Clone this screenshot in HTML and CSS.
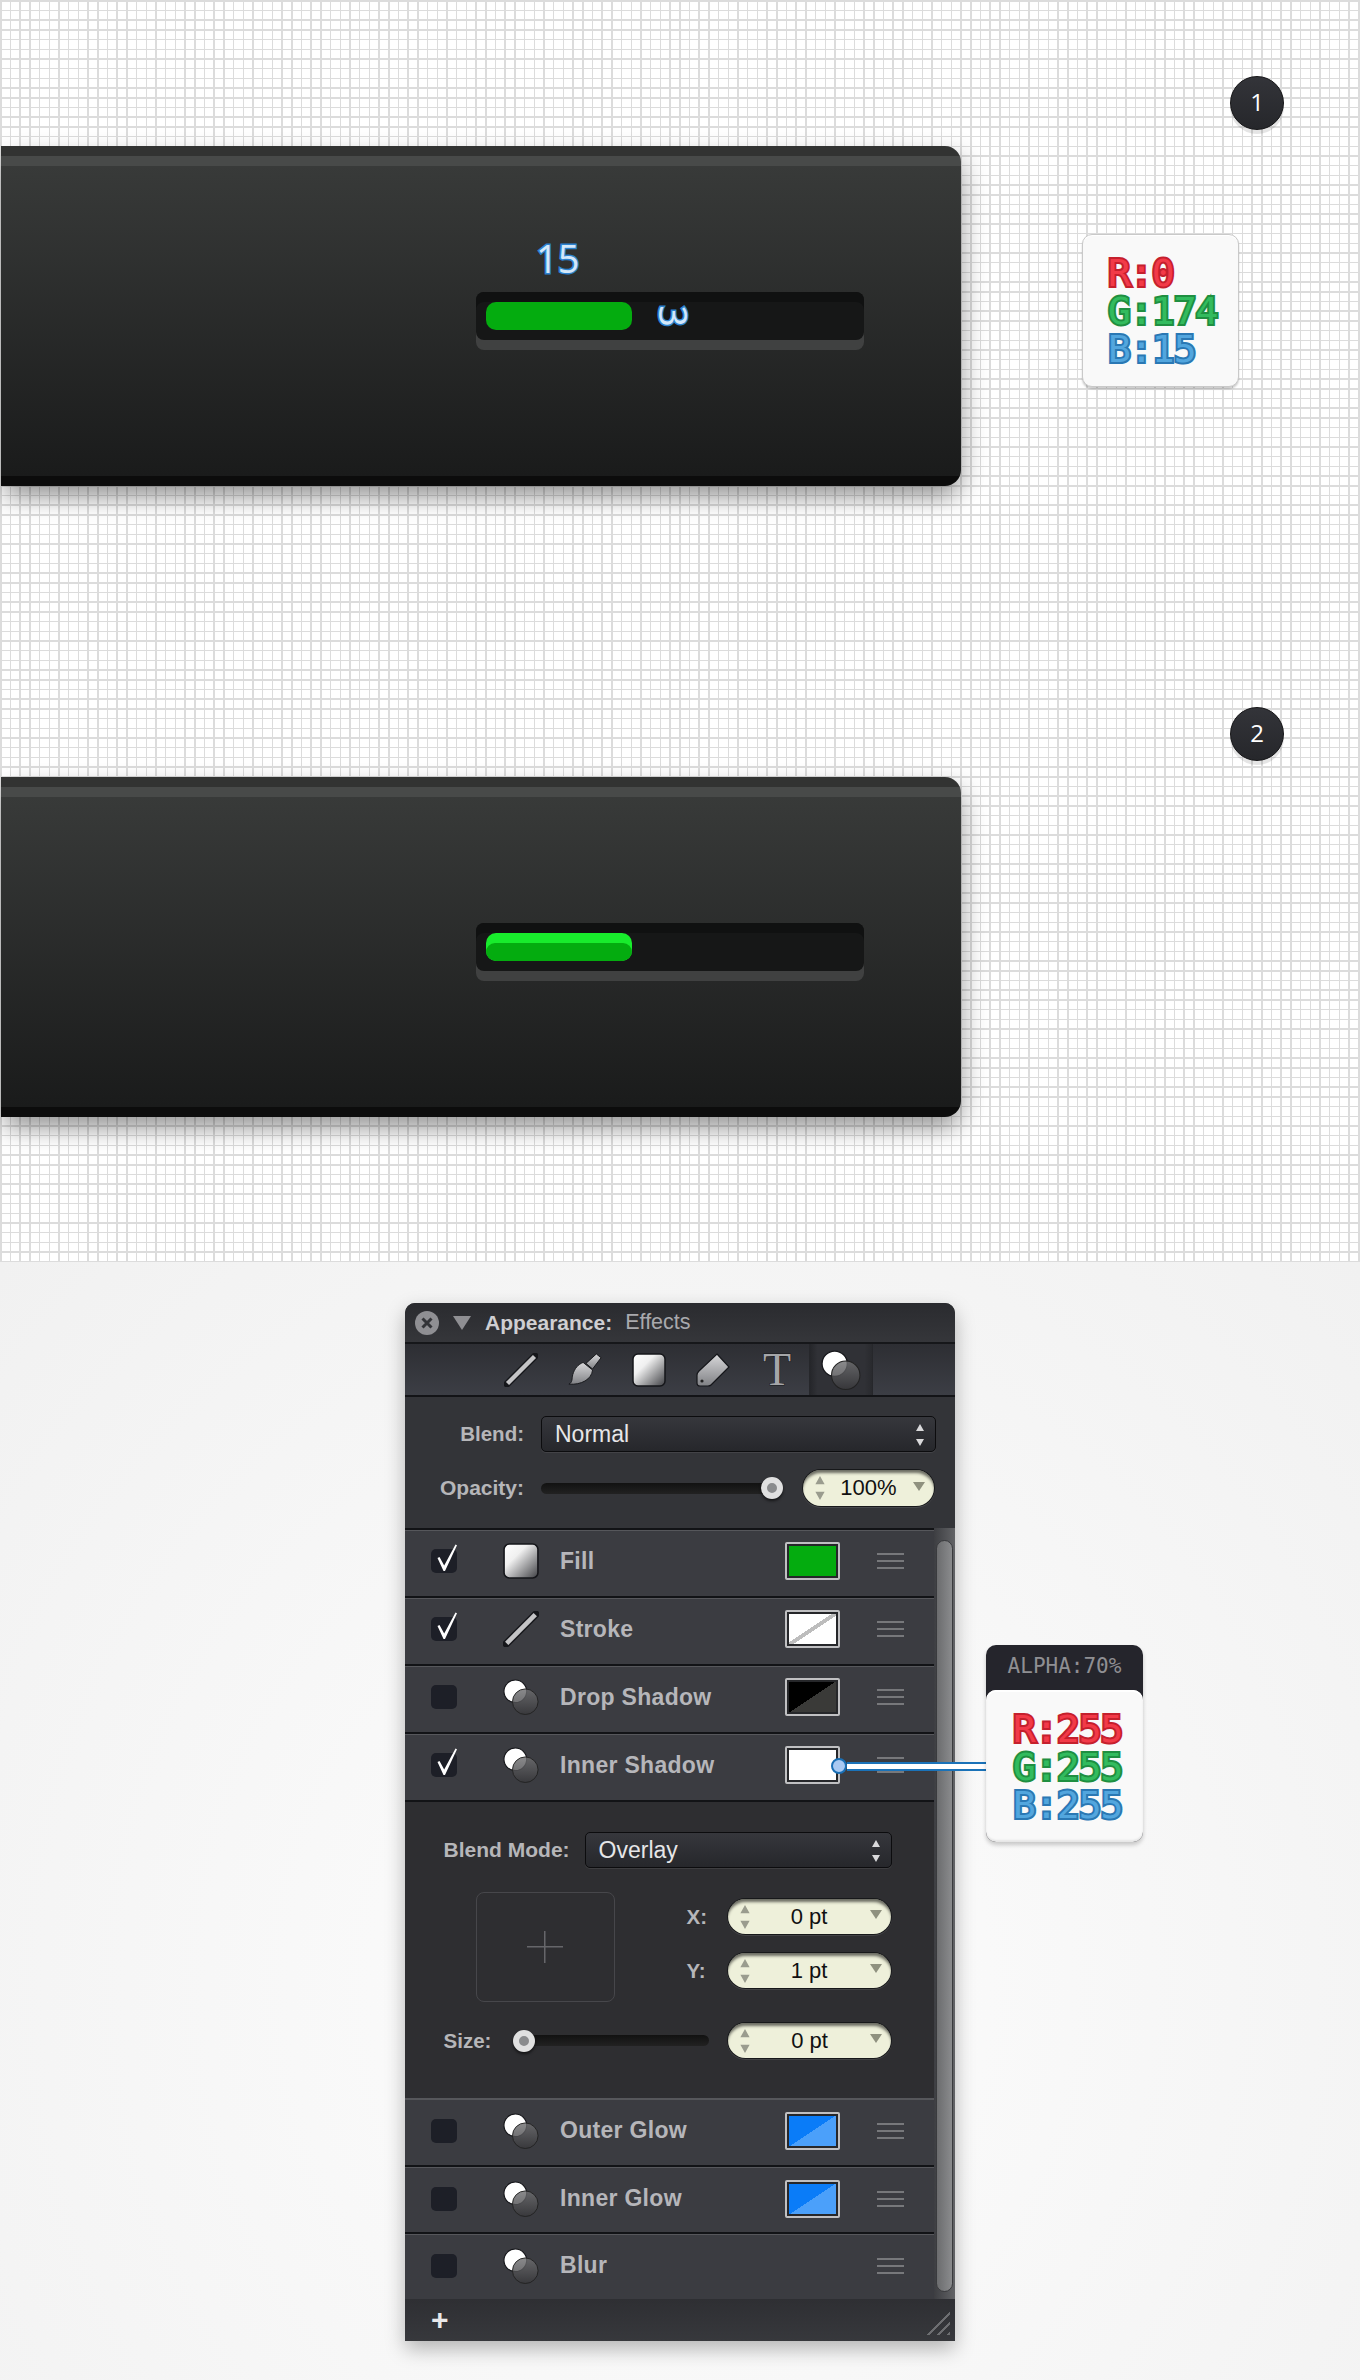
FILE: index.html
```html
<!DOCTYPE html>
<html>
  <head>
    <title>Progress bar appearance</title>
    <meta name="viewport" content="width=device-width, initial-scale=1.0">
    <link rel="stylesheet" href="styles.css">
  </head>
  <body>
    <svg class="defs" width="0" height="0">
      <defs>
        <linearGradient id="gradGrey" x1="0" y1="0" x2="1" y2="1">
          <stop offset="0" stop-color="#fff"/>
          <stop offset=".35" stop-color="#f0f0f0"/>
          <stop offset="1" stop-color="#3f4044"/>
        </linearGradient>
        <linearGradient id="gradTool" x1="0" y1="0" x2="0" y2="1">
          <stop offset="0" stop-color="#d8d8da"/>
          <stop offset="1" stop-color="#808185"/>
        </linearGradient>
        <linearGradient id="gradDark" x1="0" y1="0" x2="0" y2="1">
          <stop offset="0" stop-color="#707072"/>
          <stop offset="1" stop-color="#38383b"/>
        </linearGradient>
        <symbol id="iconLine" viewBox="0 0 34 34">
          <path d="M3 31L31 3" stroke="#15161a" stroke-width="7" stroke-linecap="round"/>
          <path d="M3.5 30.5L30.5 3.5" stroke="#c4c4c6" stroke-width="4.4"/>
        </symbol>
        <symbol id="iconBrush" viewBox="0 0 36 36">
          <path d="M30 1l5 4-9 12-7-6z" fill="url(#gradTool)" stroke="#15161a"/>
          <path d="M16 10l10 8c-1 10-12 16-25 15 4-2 3-6 4-10 2-7 6-11 11-13z" fill="url(#gradTool)" stroke="#15161a"/>
        </symbol>
        <symbol id="iconSquare" viewBox="0 0 34 34">
          <rect x="1" y="1" width="32" height="32" rx="5" fill="url(#gradGrey)" stroke="#15161a" stroke-width="1.5"/>
        </symbol>
        <symbol id="iconTag" viewBox="0 0 34 34">
          <path d="M21 1l12 13-18 18q-1 1-3 1H4q-3 0-3-3V22q0-2 2-4z" fill="url(#gradTool)" stroke="#15161a" stroke-width="1.2"/>
          <circle cx="6" cy="28" r="1.6" fill="#222"/>
        </symbol>
        <symbol id="iconEffect" viewBox="0 0 38 38">
          <circle cx="13" cy="13" r="12" fill="#fff" stroke="#15161a" stroke-width="1.2"/>
          <circle cx="23.5" cy="24" r="13.5" fill="url(#gradDark)" fill-opacity=".82" stroke="#222" stroke-width="1"/>
        </symbol>
        <symbol id="iconCheck" viewBox="0 0 26 30">
          <path d="M3.5 15l2-1 4.7 8.500L21.500 1.500l1.500.7L11 28H9.500z" fill="#fff"/>
        </symbol>
        <symbol id="iconClose" viewBox="0 0 24 24">
          <circle cx="12" cy="12" r="12" fill="#8f8f93"/>
          <path d="M7.5 7.5l9 9M16.5 7.5l-9 9" stroke="#333438" stroke-width="3"/>
        </symbol>
        <symbol id="iconStepper" viewBox="0 0 12 26">
          <path d="M6 0l5 9H1zM6 26l-5-9h10z" fill="#9a9c8e"/>
        </symbol>
        <symbol id="iconSelect" viewBox="0 0 10 24">
          <path d="M5 1l4 7H1zM5 23l-4-7h8z" fill="#d9d9db"/>
        </symbol>
      </defs>
    </svg>

    <div class="drawing">
      <div class="stage">
        <div class="card">
          <div class="measure">15</div>
          <div class="track">
            <div class="bar"></div>
            <div class="measure measure-turned">3</div>
          </div>
        </div>
        <div class="side">
          <div class="badge">1</div>
          <div class="rgb-card">
            <div class="rgb rgb-r">R:0</div>
            <div class="rgb rgb-g">G:174</div>
            <div class="rgb rgb-b">B:15</div>
          </div>
        </div>
      </div>

      <div class="stage">
        <div class="card">
          <div class="measure measure-empty"></div>
          <div class="track">
            <div class="bar bar-lit"><div class="bar-face"></div></div>
          </div>
        </div>
        <div class="side">
          <div class="badge">2</div>
        </div>
      </div>
    </div>

    <div class="desk">
      <div class="panel">
        <div class="titlebar">
          <svg class="close-icon"><use href="#iconClose"/></svg>
          <span class="disclosure"></span>
          <span class="title-main">Appearance:</span>
          <span class="title-sub">Effects</span>
        </div>

        <div class="toolbar">
          <div class="tool"><svg class="tool-icon"><use href="#iconLine"/></svg></div>
          <div class="tool"><svg class="tool-icon"><use href="#iconBrush"/></svg></div>
          <div class="tool"><svg class="tool-icon"><use href="#iconSquare"/></svg></div>
          <div class="tool"><svg class="tool-icon"><use href="#iconTag"/></svg></div>
          <div class="tool"><span class="tool-t">T</span></div>
          <div class="tool tool-active"><svg class="tool-fx"><use href="#iconEffect"/></svg></div>
        </div>

        <div class="blend-section">
          <div class="form-row">
            <span class="form-label">Blend:</span>
            <div class="select select-wide">
              <span>Normal</span>
              <svg class="select-arrows"><use href="#iconSelect"/></svg>
            </div>
          </div>
          <div class="form-row form-row-opacity">
            <span class="form-label">Opacity:</span>
            <div class="slider slider-opacity"><span class="thumb"></span></div>
            <div class="pill pill-opacity">
              <svg class="stepper"><use href="#iconStepper"/></svg>
              <span class="pill-value">100%</span>
              <span class="pill-caret"></span>
            </div>
          </div>
        </div>

        <div class="panel-body">
          <div class="layers">
            <div class="layer">
              <div class="check"><svg class="check-mark"><use href="#iconCheck"/></svg></div>
              <svg class="layer-icon"><use href="#iconSquare"/></svg>
              <span class="layer-name">Fill</span>
              <div class="swatch swatch-fill"></div>
              <div class="handle"></div>
            </div>
            <div class="layer">
              <div class="check"><svg class="check-mark"><use href="#iconCheck"/></svg></div>
              <svg class="layer-icon"><use href="#iconLine"/></svg>
              <span class="layer-name">Stroke</span>
              <div class="swatch swatch-stroke"></div>
              <div class="handle"></div>
            </div>
            <div class="layer">
              <div class="check"></div>
              <svg class="layer-icon"><use href="#iconEffect"/></svg>
              <span class="layer-name">Drop Shadow</span>
              <div class="swatch swatch-drop"></div>
              <div class="handle"></div>
            </div>
            <div class="layer">
              <div class="check"><svg class="check-mark"><use href="#iconCheck"/></svg></div>
              <svg class="layer-icon"><use href="#iconEffect"/></svg>
              <span class="layer-name">Inner Shadow</span>
              <div class="swatch swatch-white"></div>
              <div class="handle"></div>
            </div>

            <div class="detail">
              <div class="detail-blend">
                <span class="form-label">Blend Mode:</span>
                <div class="select select-mode">
                  <span>Overlay</span>
                  <svg class="select-arrows"><use href="#iconSelect"/></svg>
                </div>
              </div>
              <div class="detail-offset">
                <div class="offset-box"><span class="offset-cross"></span></div>
                <div class="offset-fields">
                  <div class="offset-field">
                    <span class="form-label offset-label">X:</span>
                    <div class="pill pill-pt">
                      <svg class="stepper"><use href="#iconStepper"/></svg>
                      <span class="pill-value">0 pt</span>
                      <span class="pill-caret"></span>
                    </div>
                  </div>
                  <div class="offset-field">
                    <span class="form-label offset-label">Y:</span>
                    <div class="pill pill-pt">
                      <svg class="stepper"><use href="#iconStepper"/></svg>
                      <span class="pill-value">1 pt</span>
                      <span class="pill-caret"></span>
                    </div>
                  </div>
                </div>
              </div>
              <div class="detail-size">
                <span class="form-label size-label">Size:</span>
                <div class="slider slider-size"><span class="thumb"></span></div>
                <div class="pill pill-pt">
                  <svg class="stepper"><use href="#iconStepper"/></svg>
                  <span class="pill-value">0 pt</span>
                  <span class="pill-caret"></span>
                </div>
              </div>
            </div>

            <div class="layer layer-low">
              <div class="check"></div>
              <svg class="layer-icon"><use href="#iconEffect"/></svg>
              <span class="layer-name">Outer Glow</span>
              <div class="swatch swatch-blue"></div>
              <div class="handle"></div>
            </div>
            <div class="layer layer-low">
              <div class="check"></div>
              <svg class="layer-icon"><use href="#iconEffect"/></svg>
              <span class="layer-name">Inner Glow</span>
              <div class="swatch swatch-blue"></div>
              <div class="handle"></div>
            </div>
            <div class="layer layer-low">
              <div class="check"></div>
              <svg class="layer-icon"><use href="#iconEffect"/></svg>
              <span class="layer-name">Blur</span>
              <div class="swatch swatch-none"></div>
              <div class="handle"></div>
            </div>
          </div>

          <div class="scrollbar"><div class="scroll-thumb"></div></div>
        </div>

        <div class="footer">
          <span class="add">+</span>
          <span class="grip"></span>
        </div>

        <!-- callout over the panel -->
        <div class="connector">
          <span class="connector-dot"></span>
          <span class="connector-line"></span>
        </div>
        <div class="alpha-card">
          <div class="alpha-head">ALPHA:70%</div>
          <div class="alpha-body">
            <div class="rgb rgb-r">R:255</div>
            <div class="rgb rgb-g">G:255</div>
            <div class="rgb rgb-b">B:255</div>
          </div>
        </div>
      </div>
    </div>
  </body>
</html>
```

FILE: styles.css
```css
body {
  margin: 0;
  width: 1360px;
  height: 2380px;
  overflow: hidden;
  font-family: "Liberation Sans", Arial, sans-serif;
  background-color: #f5f5f5;
}

.defs {
  position: absolute;
}

/* top half: graph paper */
.drawing {
  height: 1262px;
  background-color: #fff;
  background-image:
    repeating-linear-gradient(90deg, #dcdcdc 0 1.5px, transparent 1.5px 9.7px),
    repeating-linear-gradient(180deg, #dcdcdc 0 1.5px, transparent 1.5px 9.7px);
}

.stage {
  display: flex;
  align-items: flex-start;
  height: 631px;
  box-sizing: border-box;
  padding-top: 76px;
}

.card {
  width: 960px;
  height: 340px;
  margin: 70px 0 0 1px;
  box-sizing: border-box;
  padding: 91px 0 0 475px;
  border-radius: 0 16px 16px 0;
  background: linear-gradient(#323332 0 10px, #484a49 10px 20px, #383a39 20px, #1a1b1b 330px, #0c0c0c 330px);
  box-shadow: 0 16px 24px -4px rgba(0, 0, 0, .34), 8px 4px 24px rgba(0, 0, 0, .12);
}

.measure {
  height: 55px;
  margin-left: 60px;
  font-family: "Open Sans", sans-serif;
  font-size: 38px;
  line-height: 42px;
  color: #d4e8fa;
  -webkit-text-stroke: 3px #2d83cf;
  paint-order: stroke fill;
}

.measure-empty {
  visibility: hidden;
}

.measure-turned {
  height: 28px;
  margin-left: 32px;
  line-height: 30px;
  transform: rotate(90deg);
}

.track {
  display: flex;
  width: 388px;
  height: 48px;
  box-sizing: border-box;
  padding: 10px;
  border-radius: 8px;
  background-color: #161717;
  box-shadow: inset 0 10px 0 #101111, 0 10px 0 #404141;
}

.bar {
  width: 146px;
  height: 28px;
  border-radius: 10px;
  background-color: #04ac0f;
}

.bar-lit {
  background-color: #18ec2c;
  overflow: hidden;
}

.bar-face {
  height: 18px;
  margin-top: 10px;
  border-radius: 10px;
  background-color: #04ac0f;
}

.side {
  display: flex;
  flex-direction: column;
  margin-left: 121px;
}

.badge {
  width: 54px;
  height: 54px;
  margin-left: 148px;
  box-sizing: border-box;
  border: 1px solid #141416;
  border-radius: 50%;
  background: linear-gradient(#333439, #26272b);
  box-shadow: 0 4px 0 rgba(0, 0, 0, .1);
  color: #fff;
  font-family: "Open Sans", sans-serif;
  font-size: 24px;
  line-height: 50px;
  text-align: center;
}

.rgb-card {
  width: 157px;
  height: 153px;
  margin-top: 104px;
  box-sizing: border-box;
  padding: 19px 0 0 25px;
  border: 1.5px solid #c9c9c9;
  border-radius: 10px;
  background-color: #f9f9f9;
  box-shadow: inset 0 1px 0 #fff, 0 2px 2px rgba(0, 0, 0, .2);
}

.rgb {
  font-family: "DejaVu Sans Mono", monospace;
  font-size: 38px;
  line-height: 38px;
  letter-spacing: -1px;
  white-space: nowrap;
  -webkit-text-stroke-width: 4px;
  paint-order: stroke fill;
}

.rgb-r {
  color: #f23a48;
  -webkit-text-stroke-color: #c5202d;
}

.rgb-g {
  color: #32bb5e;
  -webkit-text-stroke-color: #1f8f41;
}

.rgb-b {
  color: #52a6de;
  -webkit-text-stroke-color: #2a78b4;
}

/* bottom half: the panel */
.desk {
  height: 1118px;
  box-sizing: border-box;
  padding: 41px 0 0 405px;
  background: radial-gradient(ellipse at 50% 65%, #fbfbfb 15%, #f1f1f1 100%);
}

.panel {
  position: relative;
  width: 550px;
  height: 1038px;
  display: flex;
  flex-direction: column;
  border-radius: 10px 10px 0 0;
  background-color: #333438;
  box-shadow: 0 8px 20px rgba(0, 0, 0, .28);
}

.titlebar {
  display: flex;
  align-items: center;
  height: 39px;
  padding-left: 10px;
  border-radius: 10px 10px 0 0;
  border-bottom: 2px solid #16171a;
  background: linear-gradient(#2a2b2f, #35363a);
}

.close-icon {
  width: 24px;
  height: 24px;
}

.disclosure {
  width: 0;
  height: 0;
  margin: 0 14px;
  border-top: 14px solid #8f8f93;
  border-left: 9px solid transparent;
  border-right: 9px solid transparent;
}

.title-main {
  font-size: 21px;
  font-weight: bold;
  color: #cfcfd2;
}

.title-sub {
  margin-left: 13px;
  font-size: 21.5px;
  color: #a9a9ad;
}

.toolbar {
  display: flex;
  height: 51px;
  padding-left: 84px;
  border-bottom: 2px solid #131417;
  background: linear-gradient(#2d2e33, #3c3e45);
}

.tool {
  display: flex;
  align-items: center;
  justify-content: center;
  width: 64px;
}

.tool-active {
  box-sizing: border-box;
  border-left: 1px solid #26272b;
  border-right: 1px solid #26272b;
  background: linear-gradient(90deg, #25262a, #303136 12%, #303136 88%, #292a2e);
}

.tool-icon {
  width: 34px;
  height: 34px;
}

.tool-fx {
  width: 40px;
  height: 40px;
}

.tool-t {
  font-family: "Liberation Serif", serif;
  font-size: 46px;
  line-height: 46px;
  color: #a5a6a9;
  -webkit-text-stroke: 1px #17181b;
  paint-order: stroke fill;
}

.blend-section {
  height: 131px;
  box-sizing: border-box;
  padding-top: 19px;
}

.form-row {
  display: flex;
  align-items: center;
  height: 36px;
}

.form-row-opacity {
  margin-top: 18px;
}

.form-label {
  font-size: 20.5px;
  font-weight: bold;
  color: #b6b6b9;
  white-space: nowrap;
}

.form-row .form-label {
  width: 119px;
  margin-right: 17px;
  text-align: right;
}

.form-row-opacity .form-label {
  font-size: 21px;
}

.select {
  display: flex;
  align-items: center;
  justify-content: space-between;
  height: 36px;
  box-sizing: border-box;
  padding: 1px 10px 0 13px;
  border: 1px solid #0c0c0e;
  border-radius: 5px;
  background: linear-gradient(#36373c, #26272b);
  box-shadow: 0 1px 0 rgba(255, 255, 255, .08);
  font-size: 23px;
  color: #e6e6e8;
}

.select-wide {
  width: 395px;
}

.select-mode {
  width: 307px;
}

.select-arrows {
  width: 10px;
  height: 24px;
}

.slider {
  display: flex;
  align-items: center;
  height: 11px;
  border-radius: 6px;
  background: linear-gradient(#111, #222);
}

.slider-opacity {
  width: 242px;
  justify-content: flex-end;
}

.slider-size {
  width: 196px;
  margin-right: 19px;
}

.thumb {
  flex: none;
  width: 22px;
  height: 22px;
  box-sizing: border-box;
  border: 6px solid #e0e0e0;
  border-radius: 50%;
  background-color: #8a8b8d;
  box-shadow: 0 2px 3px rgba(0, 0, 0, .6);
}

.pill {
  display: flex;
  align-items: center;
  box-sizing: border-box;
  padding: 0 9px 0 11px;
  border-radius: 18px;
  background-color: #eef0da;
  box-shadow: inset 0 4px 3px -1px rgba(0, 0, 0, .55), 0 0 0 1px #17181a, 0 1px 0 1px rgba(255, 255, 255, .1);
  font-size: 22px;
  color: #111;
}

.pill-opacity {
  width: 131px;
  height: 36px;
  margin-left: 20px;
}

.pill-pt {
  width: 163px;
  height: 35px;
}

.stepper {
  flex: none;
  width: 12px;
  height: 24px;
}

.pill-value {
  flex: 1;
  padding-right: 2px;
  text-align: center;
}

.pill-caret {
  width: 0;
  height: 0;
  margin-bottom: 4px;
  border-top: 9px solid #8f917f;
  border-left: 6px solid transparent;
  border-right: 6px solid transparent;
}

.panel-body {
  display: flex;
  height: 771px;
}

.layers {
  width: 528.5px;
}

.layer {
  display: flex;
  align-items: center;
  height: 68px;
  box-sizing: border-box;
  padding: 0 0 4px 26px;
  border-top: 2px solid #121316;
  background-color: #3b3c41;
  box-shadow: inset 0 1px 0 #56575b;
}

.layer-low {
  height: 67px;
  padding-bottom: 2px;
}

.detail + .layer {
  border-top: 0;
  box-shadow: inset 0 2px 0 #56575b;
}

.check {
  flex: none;
  position: relative;
  width: 26px;
  height: 24px;
  margin-right: 46px;
  border-radius: 5px;
  background-color: #1d1f27;
}

.check-mark {
  position: absolute;
  left: 3px;
  top: -6px;
  width: 26px;
  height: 30px;
}

.layer-icon {
  flex: none;
  width: 36px;
  height: 36px;
  margin-right: 21px;
}

.layer-name {
  flex: none;
  width: 224.5px;
  font-size: 23px;
  font-weight: bold;
  letter-spacing: .3px;
  color: #b6b6ba;
}

.swatch {
  flex: none;
  width: 55px;
  height: 38px;
  margin-right: 37px;
  box-sizing: border-box;
  border: 2px solid #c0c0c2;
  border-radius: 2px;
  box-shadow: inset 0 0 0 2px #26272a;
}

.swatch-fill {
  background-color: #04ac0f;
}

.swatch-stroke {
  background: linear-gradient(to bottom right, #fff calc(50% - 2px), #bdbdbd calc(50% - 2px) calc(50% + 2px), #fff calc(50% + 2px));
}

.swatch-drop {
  background: linear-gradient(to bottom right, #000 50%, #3a3a38 50%);
}

.swatch-white {
  background-color: #fff;
}

.swatch-blue {
  background: linear-gradient(to bottom right, #0a7cf8 50%, #4ba0fa 50%);
}

.swatch-none {
  visibility: hidden;
}

.handle {
  flex: none;
  width: 27px;
  height: 16px;
  background: linear-gradient(#77787b 0 2px, transparent 2px 7px, #77787b 7px 9px, transparent 9px 14px, #77787b 14px 16px);
}

.detail {
  height: 298px;
  box-sizing: border-box;
  padding: 30px 0 0 38.6px;
  border-top: 2px solid #121316;
  background-color: #2e2e31;
}

.detail-blend {
  display: flex;
  align-items: center;
  height: 36px;
}

.detail-blend .form-label {
  width: 127px;
  margin-right: 14px;
  font-size: 21px;
}

.detail-offset {
  display: flex;
  height: 110px;
  margin: 24px 0 0 32px;
}

.offset-box {
  display: flex;
  align-items: center;
  justify-content: center;
  width: 139px;
  height: 110px;
  box-sizing: border-box;
  border: 1.5px solid #47474b;
  border-radius: 8px;
}

.offset-cross {
  width: 36px;
  height: 32px;
  background:
    linear-gradient(#66666a, #66666a) center / 36px 1.5px no-repeat,
    linear-gradient(#66666a, #66666a) center / 1.5px 32px no-repeat;
}

.offset-fields {
  display: flex;
  flex-direction: column;
  gap: 19px;
  margin: 7px 0 0 72px;
}

.offset-field {
  display: flex;
  align-items: center;
}

.offset-label {
  width: 41px;
}

.detail-size {
  display: flex;
  align-items: center;
  margin-top: 21px;
}

.size-label {
  width: 69.4px;
}

.scrollbar {
  flex: 1;
  box-sizing: border-box;
  padding: 12px 2px 7px 2.5px;
  background: linear-gradient(90deg, #3d3e42, #626366);
}

.scroll-thumb {
  height: 752px;
  box-sizing: border-box;
  border: 1px solid #3a3b3e;
  border-radius: 9px;
  background: linear-gradient(90deg, #6b6c6e, #8a8b8d);
}

.footer {
  flex: 1;
  display: flex;
  align-items: center;
  justify-content: space-between;
  padding: 0 5px 0 26px;
  background: linear-gradient(#2e2f33, #37383c);
}

.add {
  font-size: 30px;
  font-weight: bold;
  line-height: 30px;
  color: #e8e8ea;
}

.grip {
  align-self: flex-end;
  width: 25px;
  height: 25px;
  margin-bottom: 6px;
  background: repeating-linear-gradient(135deg, transparent 0 5px, #6d6e71 5px 7px);
  clip-path: polygon(100% 0, 100% 100%, 0 100%);
}

.connector {
  position: absolute;
  left: 426px;
  top: 455px;
  display: flex;
  align-items: center;
  width: 155px;
}

.connector-dot {
  position: relative;
  flex: none;
  width: 16px;
  height: 16px;
  box-sizing: border-box;
  border: 2px solid #1a6fb5;
  border-radius: 50%;
  background-color: #a9c9f2;
}

.connector-line {
  flex: 1;
  height: 9px;
  box-sizing: border-box;
  border-top: 2px solid #1a72b8;
  border-bottom: 2px solid #1a72b8;
  background-color: #fff;
}

.alpha-card {
  position: absolute;
  left: 581px;
  top: 342px;
  width: 157px;
  height: 197px;
  border-radius: 10px;
  background-color: #25252c;
  box-shadow: 0 3px 4px rgba(0, 0, 0, .2);
}

.alpha-head {
  height: 45px;
  font-family: "DejaVu Sans Mono", monospace;
  font-size: 21px;
  line-height: 42px;
  text-align: center;
  color: #8f8f93;
}

.alpha-body {
  height: 152px;
  box-sizing: border-box;
  padding: 20px 0 0 27px;
  border-radius: 10px;
  background-color: #f9f9f9;
  box-shadow: inset 0 2px 0 #fff, inset 0 -2px 2px rgba(0, 0, 0, .08);
}
```
